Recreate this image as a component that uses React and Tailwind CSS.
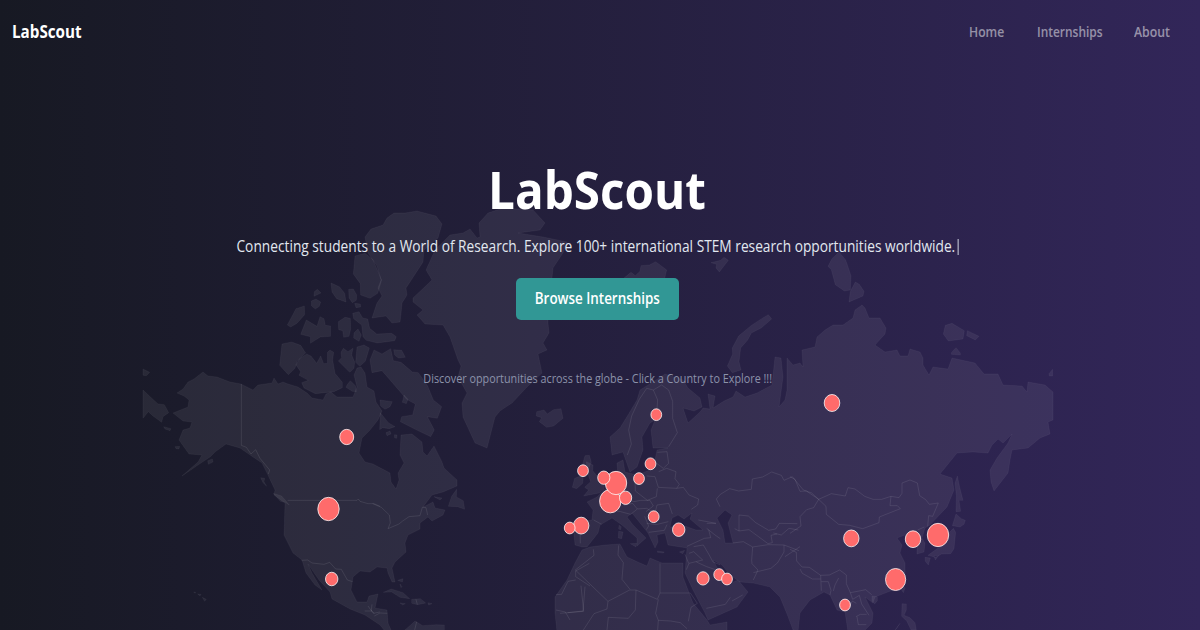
const regions = [
  {
    name: "mainlands",
    transform: undefined,
    d: [
      "M173 413L188 407L189 400L184 396L177 393L183 389L188 382L194 379L203 372L208 376L217 377L230 382L241 384L253 390L258 385L272 383L274 378L278 384L283 382L288 384L298 387L307 393L312 398L323 400L326 394L331 392L337 397L353 397L357 387L354 375L357 368L361 367L365 373L367 387L374 391L376 402L382 411L378 420L370 430L362 438L359 453L365 462L373 464L390 473L391 482L396 489L399 480L398 473L404 463L400 455L401 435L412 434L422 442L423 452L427 456L434 446L442 462L444 468L457 480L457 486L443 492L432 495L423 507L433 502L435 508L445 510L443 515L432 521L428 517L420 523L420 529L408 535L405 543L406 552L395 562L392 568L395 582L392 582L388 573L387 568L377 567L370 572L360 571L353 577L351 590L357 602L367 602L369 596L378 594L375 608L387 610L388 623L392 632L384 630L380 625L365 615L350 609L332 599L330 592L319 580L308 564L312 573L322 590L315 585L306 573L302 560L293 553L284 535L285 503L274 495L275 490L267 473L262 463L253 457L240 448L226 444L215 452L210 457L198 465L182 476L198 462L202 455L189 454L179 440L183 430L190 428L192 422L183 421Z",
      "M365 237L371 229L377 227L383 225L387 218L394 213L405 213L417 211L436 216L442 224L438 238L424 250L423 262L410 282L406 288L407 295L402 303L401 314L400 322L392 323L386 316L372 318L377 303L382 296L378 288L381 280L377 266L368 253Z",
      "M480 237L479 223L488 213L503 208L533 210L545 223L540 230L518 233L543 237L567 242L563 253L553 268L552 278L548 300L548 323L549 333L543 343L547 350L538 354L542 373L527 387L512 403L500 411L495 417L487 448L475 443L463 417L462 403L467 393L458 377L461 366L458 360L450 337L443 325L425 324L417 315L423 310L413 302L413 298L432 280L426 270L435 250L450 235L463 233L470 229L477 238Z",
      "M612 455L610 437L620 428L628 415L637 400L640 390L653 382L665 374L683 380L688 388L700 398L702 407L694 411L683 408L688 423L700 412L703 408L710 409L708 394L715 396L713 408L724 401L733 397L736 391L745 397L757 393L772 385L775 357L781 358L783 377L779 407L785 400L787 390L787 358L793 365L800 363L803 367L802 350L815 347L817 337L825 330L833 325L843 325L853 318L855 310L862 305L865 308L869 318L880 318L886 328L885 334L875 345L885 352L897 350L900 356L908 356L910 349L920 352L923 358L923 365L929 375L933 367L948 369L952 358L975 363L984 374L998 374L1003 385L1022 386L1027 392L1028 382L1045 385L1053 392L1053 420L1048 422L1050 434L1040 438L1028 448L1012 450L1010 460L1008 473L994 491L991 482L990 470L997 458L1008 443L1012 434L1003 443L998 439L992 445L988 453L973 452L957 453L940 474L952 478L954 490L947 507L930 525L925 528L922 538L925 543L924 552L917 554L917 543L912 537L905 535L897 538L902 545L900 553L905 563L905 580L893 590L875 597L873 603L865 597L873 613L872 623L863 632L848 632L845 612L837 610L830 595L824 592L810 600L800 613L798 632L793 630L787 614L780 597L770 587L753 583L740 582L730 575L722 565L713 560L720 573L727 585L738 580L748 592L737 607L708 620L705 613L693 590L685 573L687 548L668 545L665 533L657 535L658 542L655 548L648 533L632 513L627 517L633 525L646 538L637 546L637 538L622 525L612 518L600 525L598 533L587 547L582 547L575 545L573 523L592 520L593 510L587 502L597 497L607 487L618 477L617 463L623 460L625 472L637 475L650 470L655 460L657 450L668 448L653 448L651 430L655 420L650 423L642 437L643 450L637 467L630 472L625 458L623 452ZM670 527L672 518L678 515L684 519L692 513L690 519L697 525L703 530L696 530L685 526ZM717 518L725 510L732 515L728 523L733 543L725 543L723 530Z",
      "M582 550L590 547L605 545L620 544L627 557L640 563L647 566L650 558L662 563L683 563L683 577L693 603L707 620L710 625L727 622L727 632L557 632L555 613L555 597L567 580L575 563Z",
    ],
  },
  {
    name: "western-arctic",
    transform: "translate(130 200) scale(.33333)",
    d: [
      "M39 507L59 517L49 527L39 526Z",
      "M39 570L84 612L103 614L116 638L99 650L95 667L69 648L55 635L39 655Z",
      "M553 275L562 268L573 279L552 289ZM544 303L558 297L572 306L568 319L556 327L544 317ZM603 249L628 260L644 280L648 306L620 296L606 276ZM656 268L670 267L680 285L679 301L667 308L657 294ZM674 310L691 312L692 321L678 323Z",
      "M523 318L524 344L501 370L482 381L472 375L498 326ZM529 360L561 379L570 350L582 356L586 376L602 378L602 409L571 411L541 430L541 410L512 403Z",
      "M625 365L645 352L661 355L662 388L657 409L641 412L638 392L626 389ZM668 340L687 335L698 354L713 357L719 385L740 402L785 400L799 410L794 422L742 429L709 421L699 410L695 375L671 356ZM672 399L684 387L694 405L687 424L671 414Z",
      "M456 432L485 426L512 436L527 459L502 483L495 505L475 524L449 496Z",
      "M530 462L543 468L560 490L572 468L581 491L592 490L592 457L600 450L611 457L608 480L615 520L637 547L637 563L612 575L556 581L522 564L515 548L535 541L507 526L512 515L498 495L508 477Z",
      "M640 445L654 455L669 445L665 465L674 486L672 505L659 517L625 483L635 473L633 457ZM681 441L702 435L718 444L706 484L689 499L677 487ZM651 555L661 542L677 558L679 575L667 574L648 562Z",
    ],
  },
  {
    name: "eastern-arctic",
    transform: "translate(340 200) scale(.33333)",
    d: [
      "M45 168L75 160L98 178L111 207L125 240L113 280L90 295L62 285L61 251L40 222Z",
      "M102 450L126 462L152 446L160 482L183 487L217 516L235 518L263 558L280 600L305 620L292 655L262 650L283 690L272 710L232 691L181 665L185 650L218 645L226 612L200 598L176 570L145 534L126 512L96 518L90 480Z",
      "M161 449L185 451L196 472L175 474L164 465ZM192 585L204 598L199 611L187 607Z",
      "M590 635L612 630L622 642L641 629L663 626L669 655L641 678L620 682L598 665L605 653L589 648Z",
    ],
  },
  {
    name: "atlantic",
    transform: "translate(340 400) scale(.33333)",
    d: [
      "M121 38L145 68L165 80L148 86L128 83L119 89ZM138 98L150 93L153 102L141 107ZM163 104L171 105L170 115L164 114ZM120 0L157 5L150 20L135 28L122 18Z",
      "M350 268L349 291L370 302L374 328L352 320L325 319L335 289ZM282 290L306 294L300 300Z",
      "M130 577L154 567L189 578L209 596L180 592L155 576ZM215 598L241 596L257 609L233 614L215 610ZM180 609L196 611L188 615ZM264 608L276 611L266 615ZM173 541L189 536L187 546ZM180 552L186 560L183 563Z",
      "M195 690L225 663L248 677L288 674L313 675L313 695Z",
      "M735 167L748 166L754 187L745 206L725 205L730 185ZM704 235L730 225L728 250L710 266L697 262Z",
    ],
  },
  {
    name: "pacific",
    transform: "translate(130 400) scale(.33333)",
    d: [
      "M101 80L123 86L120 92L105 87ZM135 140L149 139L147 147L138 146ZM233 182L247 177L249 186L235 193ZM392 233L404 235L402 245L410 259L399 248Z",
      "M430 280L455 288L478 315L465 307L451 304ZM203 582L213 583L210 588ZM217 592L229 598L224 604ZM191 576L197 577L195 580Z",
    ],
  },
  {
    name: "barents",
    transform: "translate(540 230) scale(.33333)",
    d: [
      "M251 145L273 127L286 137L300 124L303 107L328 105L347 95L380 120L374 145ZM513 98L542 91L552 82L565 91L538 126L528 114L530 103Z",
      "M685 254L695 267L665 293L634 309L623 330L602 354L597 395L603 420L577 428L562 408L578 372L577 354L596 318L633 287L665 266Z",
    ],
  },
  {
    name: "siberia",
    transform: "translate(790 230) scale(.33333)",
    d: [
      "M147 66L167 90L183 137L181 180L163 183L136 164L124 119L114 109L126 86ZM196 156L208 163L222 184L219 198L177 216L181 184ZM466 286L486 280L523 302L519 327L475 333L460 312ZM532 302L567 319L556 330L530 317ZM484 368L498 353L511 369L511 375L484 373ZM777 431L788 418L788 438L778 438Z",
    ],
  },
  {
    name: "east-asia",
    transform: "translate(790 400) scale(.33333)",
    d: [
      "M502 228L509 262L519 301L507 301L512 334L498 335L499 286L495 250ZM498 342L514 356L526 361L522 373L510 381L487 377ZM490 385L497 397L492 446L482 461L455 462L437 472L414 466L440 447L466 433L477 399ZM405 472L421 474L415 495L406 484ZM432 468L446 466L436 480Z",
      "M338 555L345 565L340 578L333 567ZM336 611L349 612L349 630L342 646L360 653L375 668L379 690L363 690L350 663L335 649ZM330 670L315 690L321 684ZM246 588L262 590L262 602L254 612L246 604Z",
    ],
  },
  {
    name: "mediterranean",
    transform: "translate(540 400) scale(.33333)",
    d: [
      "M139 185L159 195L158 212L178 236L194 247L192 268L178 279L131 288L146 270L134 262L152 245L142 217ZM237 376L244 380L242 389L236 387ZM236 394L249 396L245 416L235 414ZM271 431L290 430L288 441ZM352 453L373 456L370 459L352 457ZM418 456L434 451L428 461Z",
    ],
  },
];

const borders = [
  {
    name: "america",
    transform: "translate(130 400) scale(.33333)",
    d: "M334 -48V136L349 142L363 162L377 149L390 175L419 210L415 222M473 301H681L685 297L690 304L714 311H732L750 319M515 481L533 480L546 489L582 493L599 487L617 507L634 508L652 540L668 545M714 618L730 640L750 636M704 633H726",
  },
  {
    name: "great-lakes",
    transform: "translate(340 400) scale(.33333)",
    d: "M98 311L124 322L148 345L151 369L144 386L177 372L188 363L207 350L240 347L247 322L258 323L263 345M96 613L94 632L103 640M103 648L120 639L142 640M228 598L232 614M230 665L224 690M648 584L665 583L684 544L707 540M707 513L748 490M707 513V530L750 558M735 560L729 633L683 638M648 630L676 636L690 660",
  },
  {
    name: "europe-africa",
    transform: "translate(540 400) scale(.33333)",
    d: "M262 165L274 132L266 90L275 48L298 -2M298 -2L320 -35L340 -30L353 0L350 40M340 -30L365 -45L386 -30L398 4V55L412 98L386 140M352 157L381 155L386 190L370 205L350 190M356 215L380 205L408 215L405 236L418 253L410 265L355 262L345 230L320 228M285 236L286 273L322 301L349 290L352 265M410 265L430 262L447 285L476 297L473 315L454 328M161 360L185 373M120 375L121 430M252 316L278 310L292 327L272 343L242 335L205 330M292 327L320 325L345 340L351 315L386 310L397 342M302 301L330 301L340 318L318 335M320 370L348 374L385 365M314 349L326 378L319 389M326 397L373 391L381 374M241 280L243 295L282 305L302 301M205 290L245 282M500 385L525 405L541 416M506 389L512 413L493 415L441 439M461 440L490 435L506 462L519 486L540 494M447 460L461 455L488 480L447 490L439 509M469 486L500 500L535 512M446 490L435 463M160 448L162 466L106 510L204 604L269 570L288 570L352 598L360 579V490M236 436L234 465L250 488L246 538L270 568M360 579H451M123 557L131 634L60 640M288 570L286 630L265 655L205 652L201 690M204 604L201 627L162 641L130 690M355 598L347 640L355 661L353 690M355 661L392 663L421 668L441 686M451 579L472 610L453 622L445 664M499 625L556 613L571 592M576 603L608 585",
  },
  {
    name: "central-asia",
    transform: "translate(540 400) scale(.33333)",
    d: "M540 320L529 297L541 283L569 266L596 273L634 268L637 237L668 231L695 216L724 226L732 241L757 230L790 270L815 279L836 298M584 386L597 393V345L625 348L647 368L686 391L707 387L718 370L772 371M597 393L627 389L684 431L697 428L693 406L711 402M700 399L724 405L747 385L775 390M579 429L610 425L638 441L635 480L636 491L654 510L640 540M638 441L684 434L732 435L732 456L713 488L693 505L640 518M732 435L777 452M780 440L735 470M500 370L528 370M475 360L528 370",
  },
  {
    name: "china",
    transform: "translate(790 400) scale(.33333)",
    d: "M0 230L15 238L30 274L49 273L86 298L124 281L166 288L174 263L195 267L224 289L249 298L275 298L303 289L327 293L336 280L336 249L360 240L382 249L389 287L407 299L418 313L445 309L428 349L416 347L413 379M86 298L108 319L109 343L146 373L179 376L218 386L267 368L268 351L331 326L322 317H300L303 289M86 298L71 323L50 329L30 350L33 378L0 400M0 448L19 457L20 483L36 501L58 502L92 526L118 525L149 510L169 525V551L181 578L213 572L227 569L245 584M30 507L37 520L67 537L92 537M92 526L94 572M94 545L115 545L123 571L120 585M130 573L135 555L146 534M181 578L188 598L208 586L215 612L237 646M173 630L187 603L199 610M198 650L211 643H230M201 650L205 674H229M383 390L403 381",
  },
];

const markers = [
  [346.7, 437, 7], [328.5, 509, 10.7], [331.7, 579, 6.2],
  [656.3, 414.7, 5.4], [583, 470.7, 5.4], [650.5, 463.8, 5.4], [639, 478.6, 5.4],
  [610.3, 501.2, 10.7], [616, 483, 10.7], [603.8, 477.7, 6.1], [625.6, 497.8, 6.1],
  [653.7, 516.7, 5.4], [678.7, 529.7, 6.2], [581.2, 525.6, 7.7], [569.7, 528, 5.4],
  [703, 578.4, 6.1], [719.2, 574.6, 5.4], [727, 579, 5.4], [832, 403, 7.8],
  [851.3, 538.4, 7.7], [913, 539.2, 7.7], [938, 535, 10.7], [895.6, 579.5, 10.1], [845, 605, 5.4],
];

function WorldMap() {
  return (
    <svg className="absolute inset-0 h-[630px] w-[1200px]" viewBox="0 0 1200 630" aria-hidden="true">
      <g fill="#fff" fillOpacity=".065" stroke="#fff" strokeOpacity=".04" strokeWidth="1" strokeLinejoin="round" fillRule="evenodd">
        {regions.map((r) => (
          <g key={r.name} transform={r.transform}>
            {r.d.map((d) => (
              <path key={d} d={d} vectorEffect="non-scaling-stroke" />
            ))}
          </g>
        ))}
      </g>
      <g fill="none" stroke="#fff" strokeOpacity=".09" strokeWidth="1" strokeLinejoin="round">
        {borders.map((b) => (
          <path key={b.name} transform={b.transform} d={b.d} vectorEffect="non-scaling-stroke" />
        ))}
      </g>
      <g fill="#ff6b6b" stroke="#fff" strokeOpacity=".75" strokeWidth="1">
        {markers.map(([x, y, r]) => (
          <ellipse key={`${x}-${y}`} cx={x} cy={y} rx={r} ry={r * 1.09} />
        ))}
      </g>
    </svg>
  );
}

export default function App() {
  return (
    <div className="relative h-[630px] w-[1200px] overflow-hidden bg-[linear-gradient(to_right,#171923,#322659)] font-['Open_Sans','Noto_Sans',sans-serif] text-white">
      <WorldMap />
      <div className="relative flex h-full flex-col">
        <header className="flex h-16 items-center justify-between pr-[29px] pl-3">
          <span className="origin-left scale-x-[.895] text-[17px] font-bold">LabScout</span>
          <nav className="flex gap-8 text-[13.5px] font-semibold whitespace-nowrap text-white/50">
            <a className="w-[36px]"><span className="inline-block origin-left scale-x-[.9]">Home</span></a>
            <a className="w-[65px]"><span className="inline-block origin-left scale-x-[.885]">Internships</span></a>
            <a className="w-[37px]"><span className="inline-block origin-left scale-x-[.91]">About</span></a>
          </nav>
        </header>
        <main className="flex w-[1195px] flex-col items-center pt-[90px]">
          <h1 className="scale-x-[.915] text-[52px] leading-[70px] font-bold whitespace-nowrap">LabScout</h1>
          <p className="mt-[10px] flex h-6 scale-x-[.886] items-center gap-[3px] pt-px text-[15.5px] whitespace-nowrap text-[#e2e8f0]">
            <span>Connecting students to a World of Research. Explore 100+ international STEM research opportunities worldwide.</span>
            <span className="h-4 w-px bg-[#e2e8f0]" />
          </p>
          <button className="mt-5 flex h-[42px] w-[163px] items-center justify-center rounded-[5px] bg-[#319795] text-[15.5px] font-semibold whitespace-nowrap">
            <span className="inline-block scale-x-[.865]">Browse Internships</span>
          </button>
          <p className="mt-[49px] scale-x-[.9] text-[12px] leading-5 whitespace-nowrap text-[#8c92aa]">
            Discover opportunities across the globe - Click a Country to Explore !!!
          </p>
        </main>
      </div>
    </div>
  );
}
